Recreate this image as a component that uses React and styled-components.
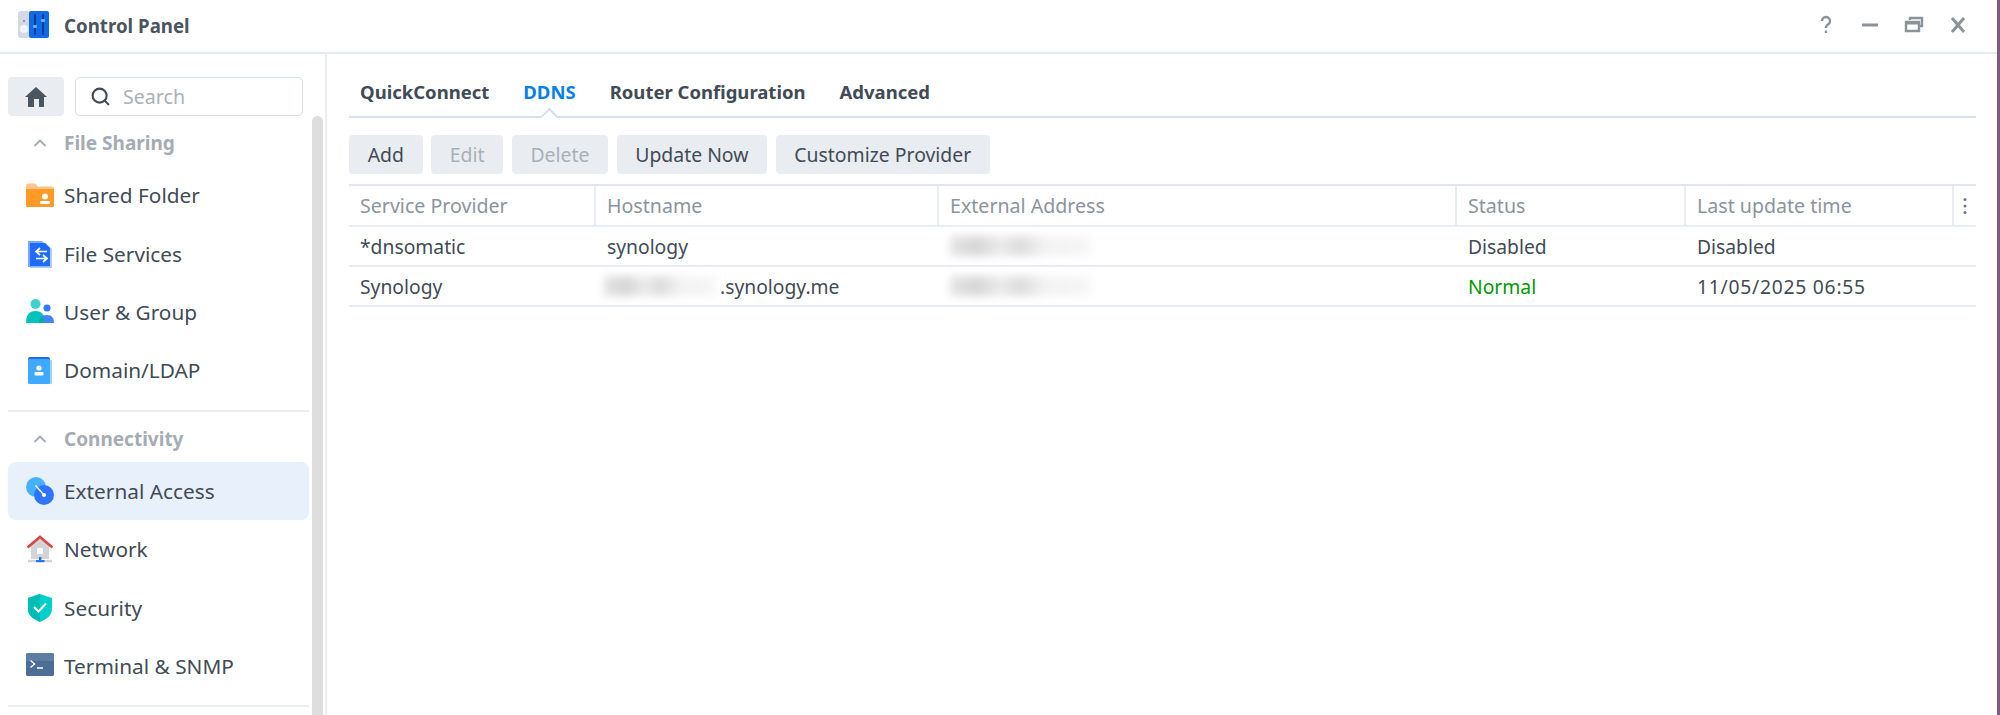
import React from "react"
import styled, { createGlobalStyle } from 'styled-components'
import { LuChevronUp, LuSearch } from 'react-icons/lu'

const GlobalStyle = createGlobalStyle`
  html, body, #root {
    margin: 0;
    height: 100%;
    overflow: hidden;
    background: #fff;
  }
  * { box-sizing: border-box; }
`

const Window = styled.div`
  height: 715px;
  display: flex;
  flex-direction: column;
  border-right: 3px solid #7d5d7c;
  font-family: "Noto Sans", sans-serif;
  font-size: 19.6px;
  color: #414b55;
  overflow: hidden;
`
const TitleBar = styled.header`
  flex: 0 0 54px;
  display: flex;
  align-items: center;
  padding: 0 29px 2px 18px;
  border-bottom: 2px solid #e3ebf3;
`
const AppTitle = styled.span`
  margin-left: 14px;
  font-size: 18.7px;
  font-weight: 700;
  color: #4a5560;
`
const WindowTools = styled.div`
  margin-left: auto;
  display: flex;
  align-items: center;
  gap: 24px;
  color: #8a929a;
`
const ToolButton = styled.svg`
  width: 20px;
  height: 20px;
  fill: none;
  stroke: currentColor;
  stroke-width: 2.4;
`
const Body = styled.div`
  flex: 1;
  display: flex;
  min-height: 0;
`
const Sidebar = styled.aside`
  flex: 0 0 327px;
  border-right: 2px solid #e8eef5;
  padding: 23px 0 0 8px;
  display: grid;
  grid-template-columns: 301px 1fr;
  grid-template-rows: 39px 1fr;
  overflow: hidden;
`
const SearchRow = styled.div`
  grid-column: 1 / 2;
  display: flex;
  gap: 11px;
  width: 295px;
`
const HomeButton = styled.button`
  flex: 0 0 56px;
  border: 0;
  border-radius: 4px;
  background: #e9edf1;
  display: flex;
  align-items: center;
  justify-content: center;
  padding: 0;
`
const SearchBox = styled.div`
  flex: 1;
  border: 1.5px solid #d5e1ec;
  border-radius: 5px;
  display: flex;
  align-items: center;
  padding-left: 14px;
  gap: 12px;
  color: #a9b0b7;
  font-size: 19.6px;
  svg { color: #414b55; }
`
const ScrollTrack = styled.div`
  grid-column: 2;
  grid-row: 1 / 3;
  margin: 39px 0 0 3px;
  width: 11px;
  background: #dedede;
  border-radius: 6px 6px 0 0;
`
const NavList = styled.nav`
  grid-column: 1;
  grid-row: 2;
  display: flex;
  flex-direction: column;
`
const GroupHead = styled.div`
  flex: none;
  height: 30px;
  margin: 12px 0 8px;
  padding-left: 22px;
  display: flex;
  align-items: center;
  gap: 14px;
  color: #a5acb3;
  font-size: 19px;
  font-weight: 700;
`
const NavItem = styled.div`
  flex: 0 0 58.4px;
  display: flex;
  align-items: center;
  gap: 10px;
  padding-left: 18px;
  border-radius: 8px;
  font-size: 20.8px;
  background: ${p => p.$active ? '#e8f0fb' : 'transparent'};
`
const NavIcon = styled.svg`
  width: 28px;
  height: 28px;
  flex: none;
`
const Divider = styled.div`
  flex: none;
  height: 2px;
  margin-top: 10px;
  background: #e9eef3;
`
const Content = styled.main`
  flex: 1;
  padding: 0 21px 0 22px;
`
const Tabs = styled.div`
  height: 64px;
  display: flex;
  align-items: center;
  gap: 34px;
  padding: 12px 0 0 11px;
  border-bottom: 2px solid #d4e0eb;
`
const Tab = styled.div`
  position: relative;
  font-size: 18.5px;
  font-weight: 700;
  color: ${p => p.$active ? '#0580e8' : '#414b55'};
  ${p => p.$active && `
    &::after {
      content: '';
      position: absolute;
      left: 50%;
      bottom: -19px;
      width: 11px;
      height: 11px;
      background: #fff;
      border-top: 2px solid #d4e0eb;
      border-left: 2px solid #d4e0eb;
      transform: translateX(-50%) rotate(45deg) scaleX(0.9);
    }
  `}
`
const Toolbar = styled.div`
  display: flex;
  gap: 8.5px;
  margin-top: 17px;
`
const Button = styled.button`
  height: 39px;
  padding: 0 18.7px;
  border: 0;
  border-radius: 4px;
  background: #e9edf1;
  font: inherit;
  font-size: 19.4px;
  color: ${p => p.disabled ? '#a9b0b7' : '#414b55'};
`
const Grid = styled.div`
  margin-top: 10px;
  border-top: 2px solid #dfe6ee;
`
const Row = styled.div`
  display: grid;
  grid-template-columns: 247px 343px 518px 229px 268px 22px;
  height: ${p => p.$head ? '41px' : '40px'};
  border-bottom: 2px solid ${p => p.$head ? '#e8eef5' : '#e6ecf3'};
  align-items: center;
`
const HeadCell = styled.div`
  height: 100%;
  display: flex;
  align-items: center;
  padding-left: ${p => p.$last ? '8px' : '11px'};
  color: #8c949c;
  border-right: ${p => p.$last ? '0' : '2px solid #e8eef5'};
`
const Cell = styled.div`
  display: flex;
  align-items: center;
  padding-left: 11px;
  font-size: 19.3px;
  letter-spacing: ${p => p.$digits ? '0.75px' : '0'};
  color: ${p => p.$ok ? '#009a00' : 'inherit'};
`
const Redacted = styled.span`
  display: block;
  width: ${p => p.$width}px;
  height: 20px;
  margin-left: ${p => p.$shift || 0}px;
  margin-right: ${p => p.$gap || 0}px;
  filter: blur(4px);
  background: linear-gradient(90deg, #e4e4e4 0%, #d6d6d6 20%, #ececec 36%, #dcdcdc 50%, #f3f3f3 68%, #f6f6f6 100%);
`
const MoreDots = styled.svg`
  width: 6px;
  height: 20px;
  fill: #6e7780;
`

const navGroups = [
  {
    title: 'File Sharing',
    items: [
      { label: 'Shared Folder', icon: 'folder' },
      { label: 'File Services', icon: 'files' },
      { label: 'User & Group', icon: 'users' },
      { label: 'Domain/LDAP', icon: 'domain' },
    ],
  },
  {
    title: 'Connectivity',
    items: [
      { label: 'External Access', icon: 'external', active: true },
      { label: 'Network', icon: 'network' },
      { label: 'Security', icon: 'security' },
      { label: 'Terminal & SNMP', icon: 'terminal' },
    ],
  },
]

const icons = {
  folder: (
    <>
      <path d="M0 4.5a2 2 0 0 1 2-2h7l3 3h14a2 2 0 0 1 2 2v3H0z" fill="#ffc48a" />
      <path d="M0 8h28v16.5a1.5 1.5 0 0 1-1.500 1.500H1.500A1.500 1.500 0 0 1 0 24.500z" fill="#ff9a26" />
      <circle cx="19" cy="15.500" r="3" fill="#fff" />
      <rect x="14" y="20" width="10" height="3" rx="1" fill="#fff" />
    </>
  ),
  files: (
    <>
      <path d="M2 1h14l8 7v19H2z" fill="#7ba9ff" />
      <path d="M4 3h15l7 6v19H4z" fill="#8fb8fb" opacity="0.7" />
      <path d="M4 3h15l5 5v18H4z" fill="#1f6bff" />
      <path d="M14 8l-4 3.500 4 3.500M10 11.500h11M17 15l4 3.500-4 3.500M21 18.500H10" fill="none" stroke="#fff" strokeWidth="1.700" />
    </>
  ),
  users: (
    <>
      <circle cx="9.500" cy="6" r="5" fill="#3ad3d0" />
      <path d="M0 25c0-8 3-12 9.500-12S19 17 19 25z" fill="#00c4bc" />
      <circle cx="21" cy="10" r="3.500" fill="#2e79ff" />
      <path d="M13 25c0-5 3-8 8-8s7 3 7 8z" fill="#4284ff" />
      <path d="M13 25c.3-3 1.400-5 3-6.300 1.600 2 2.600 4 3 6.300z" fill="#00ae9f" />
    </>
  ),
  domain: (
    <>
      <rect x="2" y="1" width="22" height="24" rx="2" fill="#2369f0" />
      <rect x="6" y="4" width="20" height="24" rx="1" fill="#9fd6ff" />
      <rect x="2" y="3" width="22" height="25" rx="1.500" fill="#3fa9ff" />
      <circle cx="13" cy="12" r="2.600" fill="#fff" />
      <rect x="8.500" y="16" width="9" height="3.500" rx="1.200" fill="#fff" />
    </>
  ),
  external: (
    <>
      <circle cx="10" cy="10" r="10" fill="#45b1ff" />
      <circle cx="18" cy="18" r="10" fill="#2d74ff" />
      <path d="M9.500 8.500 L18 18" stroke="#fff" strokeWidth="1.500" />
      <circle cx="18" cy="18" r="2" fill="#fff" />
    </>
  ),
  network: (
    <>
      <path d="M5 11L14 3l9 8v13H5z" fill="#d2d5d8" />
      <path d="M1.500 12.500L14 2l12.500 10.500" fill="none" stroke="#d9483e" strokeWidth="2.600" />
      <rect x="11" y="13" width="6" height="6" fill="#fff" />
      <rect x="2" y="25" width="24" height="2.200" fill="#cfd3d7" />
      <rect x="13" y="22" width="2.400" height="5" fill="#2474ef" />
      <rect x="10" y="25" width="8.500" height="2.200" fill="#2474ef" />
    </>
  ),
  security: (
    <>
      <path d="M14 0L2 4v11c0 6 5 10 12 13 7-3 12-7 12-13V4z" fill="#00cfcb" />
      <path d="M14 0L2 4v11c0 6 5 10 12 13z" fill="#00bdb6" />
      <path d="M8 13l4.500 4.500 7.500-8" fill="none" stroke="#fff" strokeWidth="2" />
    </>
  ),
  terminal: (
    <>
      <rect x="0" y="1" width="28" height="23" rx="1.500" fill="#4c6e96" />
      <rect x="0" y="1" width="28" height="8" rx="1.500" fill="#6a88aa" opacity="0.6" />
      <path d="M4.500 8.500l4 3.500-4 3.500M11 16h6" fill="none" stroke="#fff" strokeWidth="1.500" />
    </>
  ),
}

const AppLogo = () => (
  <svg width="32" height="30" viewBox="0 0 32 30">
    <rect x="0" y="1" width="13" height="27" rx="3" fill="#d5d9e6" />
    <circle cx="6" cy="19" r="4" fill="#f4f5f9" />
    <circle cx="6" cy="11" r="0.900" fill="#7a8090" />
    <rect x="11" y="1" width="20" height="27" rx="2" fill="#1269e6" />
    <rect x="16" y="4" width="2" height="21" fill="#0d3f9c" />
    <rect x="24" y="4" width="2" height="21" fill="#0d3f9c" />
    <rect x="15" y="15" width="4" height="3" rx="1" fill="#54b4ff" />
    <rect x="23" y="9" width="4" height="3" rx="1" fill="#54b4ff" />
  </svg>
)

const HomeIcon = () => (
  <svg width="24" height="22" viewBox="0 0 24 22">
    <path d="M12 1L1 11h3v10h16V11h3z" fill="#4a5560" />
    <rect x="10" y="13" width="5" height="8" fill="#e9edf1" />
  </svg>
)

const tableRows = [
  { provider: '*dnsomatic', host: 'synology', status: 'Disabled', updated: 'Disabled' },
  { provider: 'Synology', host: '.synology.me', hostBlur: true, status: 'Normal', ok: true, updated: '11/05/2025 06:55', digits: true },
]

export default function App() {
  return (
    <>
      <GlobalStyle />
      <Window>
        <TitleBar>
          <AppLogo />
          <AppTitle>Control Panel</AppTitle>
          <WindowTools>
            <ToolButton viewBox="0 0 20 20">
              <path d="M6 6a4 4 0 1 1 6 3.500c-1.500 1-2 1.700-2 3.500" />
              <path d="M10 15.500v2.500" />
            </ToolButton>
            <ToolButton viewBox="0 0 20 20">
              <path d="M2 10h16" strokeWidth="3" />
            </ToolButton>
            <ToolButton viewBox="0 0 20 20">
              <path d="M6 5V3h12v8h-3M2 7h13v9H2z" />
              <path d="M2 8h13" strokeWidth="3" />
            </ToolButton>
            <ToolButton viewBox="0 0 20 20">
              <path d="M4 3l12 14M16 3L4 17" strokeWidth="3" />
            </ToolButton>
          </WindowTools>
        </TitleBar>
        <Body>
          <Sidebar>
            <SearchRow>
              <HomeButton><HomeIcon /></HomeButton>
              <SearchBox>
                <LuSearch size={21} strokeWidth={2.4} />
                Search
              </SearchBox>
            </SearchRow>
            <ScrollTrack />
            <NavList>
              {navGroups.map(group => (
                <React.Fragment key={group.title}>
                  <GroupHead>
                    <LuChevronUp size={20} strokeWidth={2.2} />
                    {group.title}
                  </GroupHead>
                  {group.items.map(item => (
                    <NavItem key={item.label} $active={item.active}>
                      <NavIcon viewBox="0 0 28 28">{icons[item.icon]}</NavIcon>
                      {item.label}
                    </NavItem>
                  ))}
                  <Divider />
                </React.Fragment>
              ))}
            </NavList>
          </Sidebar>
          <Content>
            <Tabs>
              <Tab>QuickConnect</Tab>
              <Tab $active>DDNS</Tab>
              <Tab>Router Configuration</Tab>
              <Tab>Advanced</Tab>
            </Tabs>
            <Toolbar>
              <Button>Add</Button>
              <Button disabled>Edit</Button>
              <Button disabled>Delete</Button>
              <Button>Update Now</Button>
              <Button>Customize Provider</Button>
            </Toolbar>
            <Grid>
              <Row $head>
                <HeadCell>Service Provider</HeadCell>
                <HeadCell>Hostname</HeadCell>
                <HeadCell>External Address</HeadCell>
                <HeadCell>Status</HeadCell>
                <HeadCell>Last update time</HeadCell>
                <HeadCell $last>
                  <MoreDots viewBox="0 0 6 20">
                    <circle cx="3" cy="3.500" r="1.500" />
                    <circle cx="3" cy="10" r="1.500" />
                    <circle cx="3" cy="16.500" r="1.500" />
                  </MoreDots>
                </HeadCell>
              </Row>
              {tableRows.map(row => (
                <Row key={row.provider}>
                  <Cell>{row.provider}</Cell>
                  <Cell>
                    {row.hostBlur && <Redacted $width={112} $shift={-3} $gap={4} />}
                    {row.host}
                  </Cell>
                  <Cell><Redacted $width={140} /></Cell>
                  <Cell $ok={row.ok}>{row.status}</Cell>
                  <Cell $digits={row.digits}>{row.updated}</Cell>
                  <Cell />
                </Row>
              ))}
            </Grid>
          </Content>
        </Body>
      </Window>
    </>
  )
}
